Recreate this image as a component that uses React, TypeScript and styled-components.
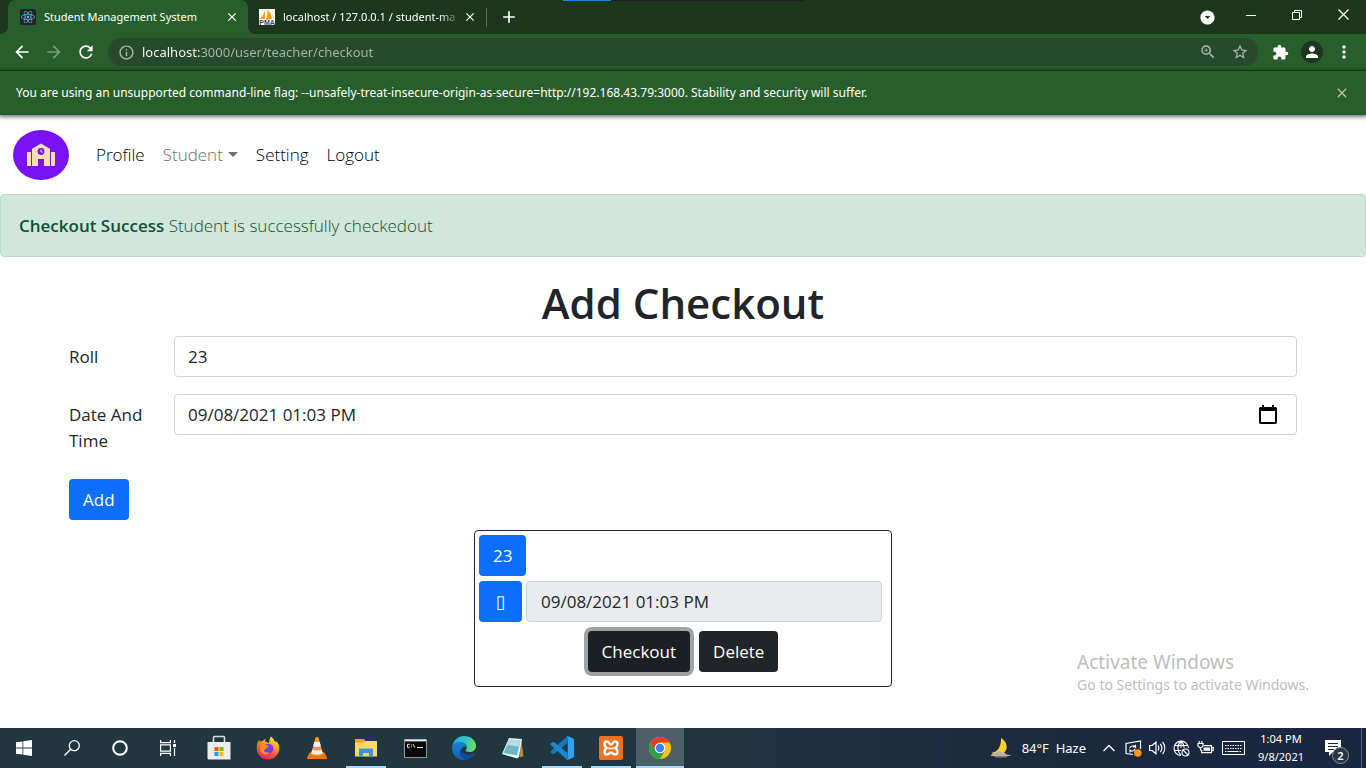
import React, { useState } from "react";
import styled, { createGlobalStyle, css } from "styled-components";
import { FaReact } from "react-icons/fa";
import {
  MdAdd,
  MdArrowBack,
  MdArrowDropDownCircle,
  MdArrowForward,
  MdClose,
  MdExtension,
  MdInfoOutline,
  MdMoreVert,
  MdPerson,
  MdRefresh,
  MdStarBorder,
  MdZoomIn,
} from "react-icons/md";

const systemFont = '"Noto Sans", "Open Sans", sans-serif';

const GlobalStyle = createGlobalStyle`
  *, *::before, *::after { box-sizing: border-box; }
  body {
    margin: 0;
    background: #fff;
    color: #212529;
    font-family: "Open Sans", "Noto Sans", sans-serif;
    font-size: 17px;
    font-weight: 400;
    line-height: 26px;
  }
  button, input { font: inherit; }
  svg { display: block; flex: none; }
`;

const Screen = styled.div`
  position: relative;
  display: flex;
  flex-direction: column;
  min-height: 100vh;
`;

const IconButton = styled.button<{ $w?: number; $h?: number; $tone?: string }>`
  display: flex;
  flex: none;
  align-items: center;
  justify-content: center;
  width: ${(p) => p.$w ?? 32}px;
  height: ${(p) => p.$h ?? 28}px;
  padding: 0;
  border: 0;
  background: none;
  color: ${(p) => p.$tone ?? "#fff"};
`;

/* ---------- browser frame ---------- */

const Frame = styled.header`
  font-family: ${systemFont};
`;

const TabStrip = styled.div`
  position: relative;
  display: flex;
  height: 34px;
  padding-left: 8px;
  background: #1b381d;
  color: #fff;
`;

const LoadingStrip = styled.div`
  position: absolute;
  top: 0;
  left: 50%;
  width: 242px;
  height: 1px;
  margin-left: -120px;
  background: linear-gradient(to right, #1e88d2 48px, #231f20 48px);
`;

const Tab = styled.div<{ $active?: boolean }>`
  position: relative;
  display: flex;
  align-items: center;
  width: ${(p) => (p.$active ? 240 : 238)}px;
  height: 34px;
  padding: 0 8px 0 ${(p) => (p.$active ? 12 : 11)}px;
  font-size: 11px;
  line-height: 16px;
  ${(p) =>
    p.$active &&
    css`
      border-radius: 8px 8px 0 0;
      background: #285e2b;
      &::before,
      &::after {
        content: "";
        position: absolute;
        bottom: 0;
        width: 8px;
        height: 8px;
      }
      &::before {
        right: 100%;
        background: radial-gradient(circle at 0 0, transparent 8px, #285e2b 8px);
      }
      &::after {
        left: 100%;
        background: radial-gradient(circle at 100% 0, transparent 8px, #285e2b 8px);
      }
    `}
`;

const TabTitle = styled.span<{ $fade?: boolean }>`
  flex: 1;
  min-width: 0;
  margin-left: 8px;
  white-space: nowrap;
  ${(p) => p.$fade && "mask-image: linear-gradient(to left, transparent 2px, #000 22px);"}
`;

const TabDivider = styled.span`
  width: 1px;
  height: 19px;
  margin-top: 8px;
  background: #58735a;
`;

const WindowControls = styled.div`
  display: flex;
  height: 29px;
  margin-left: auto;
`;

const Toolbar = styled.div`
  display: flex;
  align-items: center;
  height: 37px;
  padding: 0 6px;
  border-bottom: 1px solid #1f3f22;
  background: #285e2b;
`;

const Omnibox = styled.div`
  display: flex;
  flex: 1;
  align-items: center;
  height: 28px;
  margin: 0 6px;
  padding: 0 2px;
  border-radius: 14px;
  background: #274a2b;
`;

const Address = styled.input`
  flex: 1;
  min-width: 0;
  padding: 0;
  border: 0;
  outline: 0;
  background: linear-gradient(to right, #fff 59px, #a8b8aa 59px);
  background-clip: text;
  -webkit-background-clip: text;
  color: transparent;
  font-size: 13px;
  line-height: 20px;
`;

const Avatar = styled.span`
  display: flex;
  align-items: center;
  justify-content: center;
  width: 22px;
  height: 22px;
  border-radius: 50%;
  background: #1b381d;
`;

const InfoBar = styled.div`
  position: relative;
  display: flex;
  align-items: center;
  justify-content: space-between;
  height: 44px;
  padding: 0 8px 0 16px;
  background: #285e2b;
  box-shadow: 0 1px 4px 1px rgba(0, 0, 0, 0.55);
  color: #fff;
  font-size: 12px;
  line-height: 18px;
`;

/* ---------- page ---------- */

const Page = styled.main`
  flex: 1;
`;

const Navbar = styled.nav`
  display: flex;
  align-items: center;
  height: 79px;
  padding: 0 13px;
  font-weight: 300;
`;

const Brand = styled.a`
  display: flex;
  margin-right: 18px;
`;

const NavLink = styled.a<{ $muted?: boolean }>`
  display: flex;
  align-items: center;
  gap: 5px;
  padding: 9px;
  color: ${(p) => (p.$muted ? "#6f6f6f" : "#000")};
  text-decoration: none;
`;

const Caret = styled.span`
  border: 5px solid transparent;
  border-top-color: currentColor;
  border-bottom: 0;
`;

const Alert = styled.div`
  margin-bottom: 19px;
  padding: 18px;
  border: 1px solid #badbcc;
  border-radius: 4px;
  background: #d1e7dd;
  color: #0f5132;
  font-weight: 300;
  line-height: 25px;
`;

const AlertTitle = styled.strong`
  font-weight: 600;
`;

const Container = styled.div`
  width: 100%;
  max-width: 1254px;
  margin: 0 auto;
  padding: 0 13px;
`;

const Heading = styled.h1`
  margin: 0 0 7px;
  font-size: 42px;
  font-weight: 600;
  line-height: 53px;
  text-align: center;
`;

const FormRow = styled.div`
  display: grid;
  grid-template-columns: 78px 1fr;
  column-gap: 27px;
  align-items: start;
  margin-bottom: 17px;
`;

const Label = styled.label<{ $single?: boolean }>`
  height: ${(p) => (p.$single ? "41px" : "auto")};
  padding: 8px 0;
`;

const Field = styled.div`
  display: flex;
  align-items: center;
  height: 41px;
  padding: 0 12px 0 13px;
  border: 1px solid #ced4da;
  border-radius: 4px;
  background: #fff;
`;

const Control = styled.input`
  flex: 1;
  min-width: 0;
  padding: 0;
  border: 0;
  outline: 0;
  background: none;
  color: #212529;
`;

const Button = styled.button<{ $dark?: boolean; $focused?: boolean }>`
  height: 41px;
  padding: 0 14px;
  border: 0;
  border-radius: 4px;
  background: ${(p) => (p.$dark ? "#212529" : "#0d6efd")};
  color: #fff;
  ${(p) => p.$focused && "background: #1c1f23; box-shadow: 0 0 0 4px #a0a2a4;"}
`;

const Entry = styled.section`
  display: flex;
  flex-direction: column;
  align-items: flex-start;
  gap: 5px;
  max-width: 418px;
  margin: 10px auto 41px;
  padding: 4px 4px 14px;
  border: 1px solid #212529;
  border-radius: 4px;
`;

const EntryTime = styled.div`
  display: flex;
  gap: 4px;
  width: 100%;
  padding-right: 5px;
`;

const DisabledTime = styled(Control)`
  height: 41px;
  padding: 0 14px;
  border: 1px solid #ced4da;
  border-radius: 4px;
  background: #e9ecef;
`;

const Glyph = styled.span`
  display: inline-block;
  width: 15px;
  font-family: "DejaVu Sans", sans-serif;
  font-size: 18px;
`;

const Actions = styled.div`
  display: flex;
  align-self: center;
  gap: 9px;
  margin-top: 4px;
`;

const Watermark = styled.aside`
  position: absolute;
  right: 57px;
  bottom: 73px;
  color: #bdbdbd;
  font-family: ${systemFont};
  font-size: 14px;
  line-height: 20px;
`;

const WatermarkTitle = styled.div`
  font-size: 19px;
  line-height: 26px;
`;

/* ---------- taskbar ---------- */

const Taskbar = styled.footer`
  display: flex;
  height: 40px;
  background: linear-gradient(to right, #213840, #213740 40%, #1a2740 85%);
  color: #fff;
  font-family: ${systemFont};
  font-size: 11px;
  line-height: 18px;
`;

const Apps = styled.div`
  display: flex;
  gap: 1px;
  margin-left: 3px;
`;

const AppButton = styled(IconButton)<{ $state?: "open" | "active" }>`
  position: relative;
  width: 48px;
  height: 40px;
  background: ${(p) => (p.$state === "active" ? "#4d5f66" : "none")};
  ${(p) =>
    p.$state &&
    css`
      &::after {
        content: "";
        position: absolute;
        right: ${p.$state === "active" ? 0 : 4}px;
        bottom: 0;
        left: ${p.$state === "active" ? 0 : 4}px;
        height: 2px;
        background: #a6d8fb;
      }
    `}
`;

const Tray = styled.div`
  display: flex;
  align-items: center;
  margin-left: auto;
`;

const Weather = styled.button`
  display: flex;
  align-items: center;
  gap: 10px;
  margin-right: 11px;
  padding: 0;
  border: 0;
  background: none;
  color: #fff;
  font-size: 13px;
  white-space: pre;
`;

const Clock = styled.time`
  width: 62px;
  margin: 0 1px;
  text-align: center;
`;

const Notifications = styled(IconButton)`
  position: relative;
  margin-right: 8px;
`;

const Badge = styled.span`
  position: absolute;
  right: 4px;
  bottom: 4px;
  width: 17px;
  height: 17px;
  border: 1px solid #8b95a0;
  border-radius: 50%;
  background: #2b3442;
  font-size: 11px;
  font-weight: 600;
  line-height: 15px;
`;

const ShowDesktop = styled.span`
  width: 5px;
  height: 40px;
  border-left: 1px solid #5b6678;
`;

/* ---------- drawings ---------- */

const PmaIcon = () => (
  <svg width="16" height="16" viewBox="0 0 16 16">
    <path fill="#fff" d="M0 0h16v16H0z" />
    <path fill="#f89c0e" d="M6 1v9H1C3 8 5 5 6 1zM8 0c3 3 5 7 5 10L7 11c1-3 2-7 1-11z" />
    <path fill="#fbc46d" d="M11 2c2 2 4 5 4 8h-1c0-3-1-6-3-8z" />
    <text x="8" y="16" textAnchor="middle" fontSize="7" fontWeight="700" fill="#3b3f78" fontFamily="Liberation Sans">PMA</text>
  </svg>
);

const SchoolLogo = () => (
  <svg width="56" height="50" viewBox="0 0 56 50">
    <ellipse cx="28" cy="25" rx="28" ry="25" fill="#7912f4" />
    <g fill="#f5deb3">
      <path d="M28 13.500l8.500 5c.5.300.5.600.5 1V36h-6v-7h-6v7h-6V19.500c0-.4 0-.7.5-1z" />
      <path d="M14 23c0-.6.400-1 1-1h3v14h-3c-.6 0-1-.4-1-1zM38 22h3c.6 0 1 .4 1 1v12c0 .6-.4 1-1 1h-3z" />
    </g>
    <circle cx="28" cy="21.500" r="3.400" fill="#7912f4" />
    <path d="M28 19.500V22h1.800" fill="none" stroke="#f5deb3" />
  </svg>
);

const CalendarIcon = () => (
  <svg width="18" height="19" viewBox="0 0 18 19">
    <path fill="#000" d="M3 0h2v2h8V0h2v2h1.500c.8 0 1.500.6 1.500 1.500v14c0 .8-.7 1.500-1.500 1.500h-15C.7 19 0 18.300 0 17.500v-14C0 2.600.7 2 1.500 2H3zM2 6v11h14V6z" />
  </svg>
);

const WindowsIcon = () => (
  <svg width="16" height="16" viewBox="0 0 16 16" fill="#fff">
    <path d="M0 2.300l6.500-.9v6.200H0zM7.300 1.300L16 0v7.600H7.300zM0 8.400h6.500v6.200L0 13.700zM7.300 8.400H16V16l-8.700-1.300z" />
  </svg>
);

const SearchIcon = () => (
  <svg width="16" height="16" viewBox="0 0 16 16" fill="none" stroke="#fff" strokeWidth="1.300">
    <circle cx="10.300" cy="5.700" r="5" />
    <path d="M6.700 9.300L.5 15.500" />
  </svg>
);

const CortanaIcon = () => (
  <svg width="18" height="18" viewBox="0 0 18 18" fill="none" stroke="#fff" strokeWidth="2">
    <circle cx="9" cy="9" r="6.800" />
  </svg>
);

const TaskViewIcon = () => (
  <svg width="16" height="16" viewBox="0 0 16 16" fill="none" stroke="#fff" strokeWidth="1.200">
    <path d="M.6 0v2.600h9.800V0M.6 16v-2.600h9.800V16M.6 4.800h9.800v6.400H.6zM14.500 0v3M14.500 8v8" />
    <path fill="#fff" stroke="none" d="M13 4h3v3h-3z" />
  </svg>
);

const StoreIcon = () => (
  <svg width="24" height="26" viewBox="0 0 24 26">
    <path d="M6.500 9V2.500c0-.6.400-1 1-1h9c.6 0 1 .4 1 1V9" fill="none" stroke="#dcdcdc" strokeWidth="1.600" />
    <path fill="#ededed" d="M.5 7h23v17.500H2c-.8 0-1.500-.6-1.500-1.500z" />
    <path fill="#f25022" d="M7.500 12h4v4h-4z" />
    <path fill="#7fba00" d="M12.500 12h4v4h-4z" />
    <path fill="#00a4ef" d="M7.500 17h4v4h-4z" />
    <path fill="#ffb900" d="M12.500 17h4v4h-4z" />
  </svg>
);

const FirefoxIcon = () => (
  <svg width="24" height="24" viewBox="0 0 24 24">
    <defs>
      <linearGradient id="ff" x1="0.800" y1="0" x2="0.300" y2="1">
        <stop offset="0" stopColor="#fff14f" />
        <stop offset="0.400" stopColor="#ff9a1f" />
        <stop offset="0.700" stopColor="#ff4a41" />
        <stop offset="1" stopColor="#e01f78" />
      </linearGradient>
    </defs>
    <path fill="url(#ff)" d="M15 .500c2 1.500 3 3 3.500 4.500.8.300 1.500.900 2 1.500-.1-.7-.3-1.300-.5-1.800 2.200 2.200 3.500 5 3.200 8.300C22.700 19 18 23.500 12 23.500S.8 18.800.7 12.500C.6 9 1.500 6 3.500 3.800c0 .8.100 1.400.4 2C4.700 5.200 5.700 5 6.800 5 7.700 3.900 8.800 3.200 10 3c-.6.800-.9 1.700-.8 2.500L13 7c.5-2.500.500-4.500 2-6.500z" />
    <circle cx="12.500" cy="12.700" r="5" fill="#7a42d8" />
    <path fill="#ff9320" d="M4.500 9c2.500-1.600 5-1 6.200.5l2.300.3c-.2 1.400-2.300 1.500-2.800 2.400-.3 1.200-1.400 1.700-2.700 1.700 1 2.300 3.400 3.200 6 2.300-1 2.300-4.300 3-6.500 1.800C4.500 16.500 3.500 13 4.500 9z" />
  </svg>
);

const VlcIcon = () => (
  <svg width="20" height="24" viewBox="0 0 20 24">
    <path fill="#f57c00" d="M2.500 16.500h15L20 22c.1.600-.2 1-.7 1H.7c-.5 0-.8-.4-.7-1z" />
    <path fill="#ff9a1a" d="M8.500 1.500C9 .7 11 .7 11.500 1.500L16 18c-1.500 2-10.500 2-12 0z" />
    <path fill="#f1f1f1" d="M7.300 6h5.400l1.200 4.300c-2 .9-5.800.9-7.800 0zM5.200 13.700c2.500 1.100 7.100 1.100 9.600 0l1 3.600c-2.300 1.700-9.300 1.700-11.600 0z" />
  </svg>
);

const FolderIcon = () => (
  <svg width="22" height="20" viewBox="0 0 22 20">
    <path fill="#e8a317" d="M0 1h9l1.500 2H22v4H0z" />
    <path fill="#ffd968" d="M0 4.500h9L10.500 3H22v15.500H0z" />
    <path fill="#3f93dd" d="M4 11.500c0-.6.400-1 1-1h12c.6 0 1 .4 1 1V19h-4v-4H8v4H4z" />
  </svg>
);

const TerminalIcon = () => (
  <svg width="23" height="19" viewBox="0 0 23 19">
    <path fill="#8f9699" d="M0 0h23v19H0z" />
    <path fill="#e6e6e6" d="M1 .500h21v2H1z" />
    <path fill="#0a0a0a" d="M1 2.500h21V18H1z" />
    <path d="M5.800 5.300H3.500v3h2.300M7.500 5.500v.8M7.500 7.500v.8M9 5l1.800 3.500M13 8.500h6" fill="none" stroke="#e6e6e6" />
  </svg>
);

const EdgeIcon = () => (
  <svg width="24" height="24" viewBox="0 0 24 24">
    <defs>
      <linearGradient id="eg" x1="0" y1="0.300" x2="1" y2="0.500">
        <stop offset="0" stopColor="#2aa7e6" />
        <stop offset="0.550" stopColor="#31c5c5" />
        <stop offset="1" stopColor="#6be25c" />
      </linearGradient>
      <linearGradient id="eb" x1="0" y1="0" x2="0" y2="1">
        <stop offset="0" stopColor="#1681d6" />
        <stop offset="1" stopColor="#1064b5" />
      </linearGradient>
    </defs>
    <path fill="url(#eb)" d="M0 12c.5-4 4-6 7.500-6 4 0 6.500 2.500 6.500 5-1.500-1.500-5 0-4.500 4 .5 3 4.500 5 8.500 4 1.500-.3 3-1.200 3.800-1.500.3-.1.600.200.400.500C20 22 16 24 12 24 5 24 0 18.500 0 12z" />
    <path fill="url(#eg)" d="M.2 11C1 4.500 6 0 12 0c7 0 12 4.500 12 10 0 3.500-2.500 6-6 6-3 0-4.800-1-4.300-2 .6-.6 1.100-1.500 1-2.800C14.500 8.300 11.500 6 8 6 4 6 1 8 .2 11z" />
    <path fill="#12479c" d="M9.300 12.500c-2.600 1.500-3 8 3.700 11.400 3.500-.2 7-2.300 9-5.600.2-.4 0-.7-.4-.5C16 20.500 9.500 18.500 9.300 12.500z" />
  </svg>
);

const NotepadIcon = () => (
  <svg width="24" height="22" viewBox="0 0 24 22">
    <path fill="#b98a3c" d="M20 2l2.500 17-4 1.500z" />
    <path fill="#e9f3f5" d="M8 1l13 1-3 18-2 1.500L1 17z" />
    <path fill="#6fb7c6" d="M8.500 2.500l11 1-3.500 15L2.500 16z" />
    <path fill="#b5dde4" d="M8.500 2.500l11 1-1.500 6L6 8z" />
  </svg>
);

const CodeIcon = () => (
  <svg width="24" height="24" viewBox="0 0 24 24">
    <path fill="#1277bd" d="M17.500 0v7L4 18l-1.300.1L.6 16.500c-.4-.4-.4-.9 0-1.300z" />
    <path fill="#1b8ad3" d="M17.500 24v-7L4 6l-1.300-.1L.6 7.500c-.4.400-.4.900 0 1.300z" />
    <path fill="#2fa4f2" d="M17.500 0L23 2.400c.6.300 1 .8 1 1.500v16.200c0 .7-.4 1.200-1 1.500L17.500 24c-.3 0-.7-.1-1-.5.600.3 1.200 0 1.200-.8V1.300c0-.8-.6-1.100-1.200-.8.3-.4.700-.5 1-.5z" />
  </svg>
);

const XamppIcon = () => (
  <svg width="24" height="24" viewBox="0 0 24 24">
    <rect width="24" height="24" rx="2" fill="#f0701c" />
    <path d="M8 5.500C4.800 5.500 4.500 10 8 12c-3.500 2-3.200 6.500 0 6.500 2.200 0 2.200-2 4-2s1.800 2 4 2c3.200 0 3.500-4.500 0-6.500 3.500-2 3.200-6.500 0-6.500-2.200 0-2.200 3-4 3s-1.800-3-4-3z" fill="none" stroke="#fff" strokeWidth="2.400" />
    <path d="M9.500 12.500h5" stroke="#fff" strokeWidth="1.600" />
  </svg>
);

const ChromeIcon = () => (
  <svg width="22" height="22" viewBox="0 0 22 22">
    <circle cx="11" cy="11" r="11" fill="#fbc116" />
    <path fill="#e33b2e" d="M1.470 5.500A11 11 0 0 1 20.530 5.500H11L6.240 13.750z" />
    <path fill="#2aa147" d="M1.470 5.500A11 11 0 0 0 11 22l4.760-8.250H6.240z" />
    <circle cx="11" cy="11" r="5.300" fill="#fff" />
    <circle cx="11" cy="11" r="4.200" fill="#3f81f0" />
  </svg>
);

const MoonIcon = () => (
  <svg width="23" height="20" viewBox="0 0 23 20">
    <path fill="#ffcf30" d="M12 0c5.500 3 8 10 3 15-4 3-10 2.500-12.500-.5 5 .5 10-5 9.500-14.500z" />
    <path fill="#b9b2ad" d="M2 18c0-2 2-3 4-2.500 1.500-3 6-3 7.500-.5 2-.5 3.500.5 3.500 1.500 2 0 4 .5 5 1.500z" />
    <path fill="#8d7866" d="M4 18h15l-2 1.500H7z" />
  </svg>
);

const ChevronIcon = () => (
  <svg width="12" height="8" viewBox="0 0 12 8" fill="none" stroke="#fff" strokeWidth="1.300">
    <path d="M.5 7L6 1.500 11.500 7" />
  </svg>
);

const UpdateIcon = () => (
  <svg width="17" height="17" viewBox="0 0 17 17" fill="none" stroke="#fff" strokeWidth="1.200">
    <path d="M8 14.500L1 13.500v-10L15.500 1v8" />
    <path d="M5 8c0-2 4-3 5.500-1V4.800M10.500 7H8M10 9c-1 2.500-4 2.500-5 1v2.500" />
    <circle cx="12.800" cy="13" r="3.800" fill="#ff9800" stroke="none" />
  </svg>
);

const SpeakerIcon = () => (
  <svg width="17" height="14" viewBox="0 0 17 14" fill="none" stroke="#fff" strokeWidth="1.200">
    <path d="M.6 4.500h2.600L7 1.200v11.600L3.200 9.500H.6zM9 4.500c1 1.500 1 3.500 0 5M11.300 2.800c1.900 2.500 1.900 5.900 0 8.400M13.600 1c2.900 3.600 2.900 8.400 0 12" />
  </svg>
);

const GlobeIcon = () => (
  <svg width="17" height="17" viewBox="0 0 17 17" fill="none" stroke="#fff" strokeWidth="1.100">
    <path d="M8 15.500A7.200 7.200 0 1 1 15.400 8M8 15.500C3.800 11 3.800 5 8 .8M8 .8c2 2 3 4.500 3.200 7M1.500 5.500h13M1 10.500h7M8 .8v7" />
    <circle cx="12.500" cy="12.500" r="3.500" />
    <path d="M10 10l5 5" />
  </svg>
);

const BatteryIcon = () => (
  <svg width="17" height="14" viewBox="0 0 17 14">
    <path fill="none" stroke="#fff" strokeWidth="1.200" d="M7 4.600h7.500v7H4.600V9M14.500 6.500h1.700v3h-1.700M1 2.500h5v2.400L4.700 6.500H2.300L1 4.900zM2.200 2.500V0M4.800 2.500V0M3.500 6.500V9h1" />
    <path fill="#fff" d="M6.500 6.500H13v3.300H6.500z" />
  </svg>
);

const KeyboardIcon = () => (
  <svg width="23" height="14" viewBox="0 0 23 14" fill="none" stroke="#fff">
    <path d="M.5.500h22v13H.5z" />
    <path strokeDasharray="1.500 1" d="M3 4.500h17M3 7.500h17" />
    <path strokeDasharray="1.500 1 11 1 1.500" d="M3 10.500h17" />
  </svg>
);

const NoteIcon = () => (
  <svg width="16" height="16" viewBox="0 0 16 16">
    <path fill="#fff" d="M0 0h16v12H8l-4 4v-4H0z" />
    <path stroke="#1a2740" d="M3 3.500h10M3 6.500h10M3 9.500h6" />
  </svg>
);

const MinimizeIcon = () => (
  <svg width="10" height="10" viewBox="0 0 10 10" stroke="#fff">
    <path d="M0 5.500h10" />
  </svg>
);

const RestoreIcon = () => (
  <svg width="10" height="10" viewBox="0 0 10 10" fill="none" stroke="#fff">
    <path d="M.5 2.500h7v7h-7zM2.500 2.500v-2h7v7h-2" />
  </svg>
);

const CloseIcon = () => (
  <svg width="11" height="11" viewBox="0 0 11 11" stroke="#fff" strokeWidth="1.200">
    <path d="M.5.500l10 10M10.500.500l-10 10" />
  </svg>
);

const apps: { name: string; icon: React.ReactNode; state?: "open" | "active" }[] = [
  { name: "Microsoft Store", icon: <StoreIcon /> },
  { name: "Firefox", icon: <FirefoxIcon /> },
  { name: "VLC", icon: <VlcIcon /> },
  { name: "File Explorer", icon: <FolderIcon />, state: "open" },
  { name: "Command Prompt", icon: <TerminalIcon /> },
  { name: "Edge", icon: <EdgeIcon /> },
  { name: "Notepad", icon: <NotepadIcon /> },
  { name: "Visual Studio Code", icon: <CodeIcon />, state: "open" },
  { name: "XAMPP", icon: <XamppIcon />, state: "open" },
  { name: "Chrome", icon: <ChromeIcon />, state: "active" },
];

function BrowserFrame() {
  const [address, setAddress] = useState("localhost:3000/user/teacher/checkout");
  return (
    <Frame>
      <TabStrip>
        <Tab $active>
          <svg width="16" height="16" viewBox="0 0 16 16">
            <rect width="16" height="16" rx="2" fill="#20232a" />
            <FaReact x="1" y="1" size={14} color="#61bcd8" />
          </svg>
          <TabTitle>Student Management System</TabTitle>
          <IconButton $w={16} $h={16} aria-label="Close tab"><MdClose size={14} /></IconButton>
        </Tab>
        <Tab>
          <PmaIcon />
          <TabTitle $fade>localhost / 127.0.0.1 / student-ma</TabTitle>
          <IconButton $w={16} $h={16} aria-label="Close tab"><MdClose size={14} /></IconButton>
        </Tab>
        <TabDivider />
        <IconButton $w={44} $h={34} aria-label="New tab"><MdAdd size={20} /></IconButton>
        <WindowControls>
          <IconButton $w={42} $h={34} aria-label="Search tabs"><MdArrowDropDownCircle size={17} /></IconButton>
          <IconButton $w={46} $h={29} aria-label="Minimize"><MinimizeIcon /></IconButton>
          <IconButton $w={46} $h={29} aria-label="Restore"><RestoreIcon /></IconButton>
          <IconButton $w={46} $h={29} aria-label="Close"><CloseIcon /></IconButton>
        </WindowControls>
        <LoadingStrip />
      </TabStrip>
      <Toolbar>
        <IconButton aria-label="Back"><MdArrowBack size={20} /></IconButton>
        <IconButton $tone="#7d9c7f" aria-label="Forward"><MdArrowForward size={20} /></IconButton>
        <IconButton aria-label="Reload"><MdRefresh size={20} /></IconButton>
        <Omnibox>
          <IconButton $tone="#aeb9af" aria-label="Site information"><MdInfoOutline size={17} /></IconButton>
          <Address aria-label="Address" value={address} onChange={(e) => setAddress(e.target.value)} />
          <IconButton $tone="#aeb9af" aria-label="Zoom"><MdZoomIn size={18} /></IconButton>
          <IconButton $tone="#aeb9af" aria-label="Bookmark"><MdStarBorder size={18} /></IconButton>
        </Omnibox>
        <IconButton aria-label="Extensions"><MdExtension size={17} /></IconButton>
        <IconButton aria-label="Account"><Avatar><MdPerson size={18} /></Avatar></IconButton>
        <IconButton aria-label="Menu"><MdMoreVert size={20} /></IconButton>
      </Toolbar>
      <InfoBar>
        <span>
          You are using an unsupported command-line flag: --unsafely-treat-insecure-origin-as-secure=http://192.168.43.79:3000. Stability and security will suffer.
        </span>
        <IconButton $tone="#b5c2b6" aria-label="Dismiss"><MdClose size={16} /></IconButton>
      </InfoBar>
    </Frame>
  );
}

function CheckoutPage() {
  const [roll, setRoll] = useState("23");
  const [time, setTime] = useState("09/08/2021 01:03 PM");
  return (
    <Page>
      <Navbar>
        <Brand href="#home" aria-label="Home"><SchoolLogo /></Brand>
        <NavLink href="#profile">Profile</NavLink>
        <NavLink href="#student" $muted>Student<Caret /></NavLink>
        <NavLink href="#setting">Setting</NavLink>
        <NavLink href="#logout">Logout</NavLink>
      </Navbar>
      <Alert role="alert"><AlertTitle>Checkout Success</AlertTitle> Student is successfully checkedout</Alert>
      <Container>
        <Heading>Add Checkout</Heading>
        <FormRow>
          <Label htmlFor="roll" $single>Roll</Label>
          <Field>
            <Control id="roll" value={roll} onChange={(e) => setRoll(e.target.value)} />
          </Field>
        </FormRow>
        <FormRow>
          <Label htmlFor="time">Date And Time</Label>
          <Field>
            <Control id="time" value={time} onChange={(e) => setTime(e.target.value)} />
            <IconButton aria-label="Open calendar"><CalendarIcon /></IconButton>
          </Field>
        </FormRow>
        <Button>Add</Button>
      </Container>
      <Entry>
        <Button>23</Button>
        <EntryTime>
          <Button aria-label="Time"><Glyph>▯</Glyph></Button>
          <DisabledTime aria-label="Checkout time" value={time} readOnly />
        </EntryTime>
        <Actions>
          <Button $dark $focused>Checkout</Button>
          <Button $dark>Delete</Button>
        </Actions>
      </Entry>
    </Page>
  );
}

function DesktopTaskbar() {
  return (
    <Taskbar>
      <AppButton aria-label="Start"><WindowsIcon /></AppButton>
      <AppButton aria-label="Search"><SearchIcon /></AppButton>
      <AppButton aria-label="Cortana"><CortanaIcon /></AppButton>
      <AppButton aria-label="Task view"><TaskViewIcon /></AppButton>
      <Apps>
        {apps.map((app) => (
          <AppButton key={app.name} aria-label={app.name} $state={app.state}>{app.icon}</AppButton>
        ))}
      </Apps>
      <Tray>
        <Weather><MoonIcon />{"84°F  Haze"}</Weather>
        <IconButton $w={24} aria-label="Hidden icons"><ChevronIcon /></IconButton>
        <IconButton $w={24} aria-label="Update"><UpdateIcon /></IconButton>
        <IconButton $w={24} aria-label="Volume"><SpeakerIcon /></IconButton>
        <IconButton $w={24} aria-label="Network"><GlobeIcon /></IconButton>
        <IconButton $w={24} aria-label="Battery"><BatteryIcon /></IconButton>
        <IconButton $w={32} aria-label="Keyboard"><KeyboardIcon /></IconButton>
        <Clock>1:04 PM<br />9/8/2021</Clock>
        <Notifications $w={40} $h={40} aria-label="Notifications">
          <NoteIcon />
          <Badge>2</Badge>
        </Notifications>
        <ShowDesktop />
      </Tray>
    </Taskbar>
  );
}

export default function App() {
  return (
    <Screen>
      <GlobalStyle />
      <BrowserFrame />
      <CheckoutPage />
      <Watermark>
        <WatermarkTitle>Activate Windows</WatermarkTitle>
        Go to Settings to activate Windows.
      </Watermark>
      <DesktopTaskbar />
    </Screen>
  );
}
